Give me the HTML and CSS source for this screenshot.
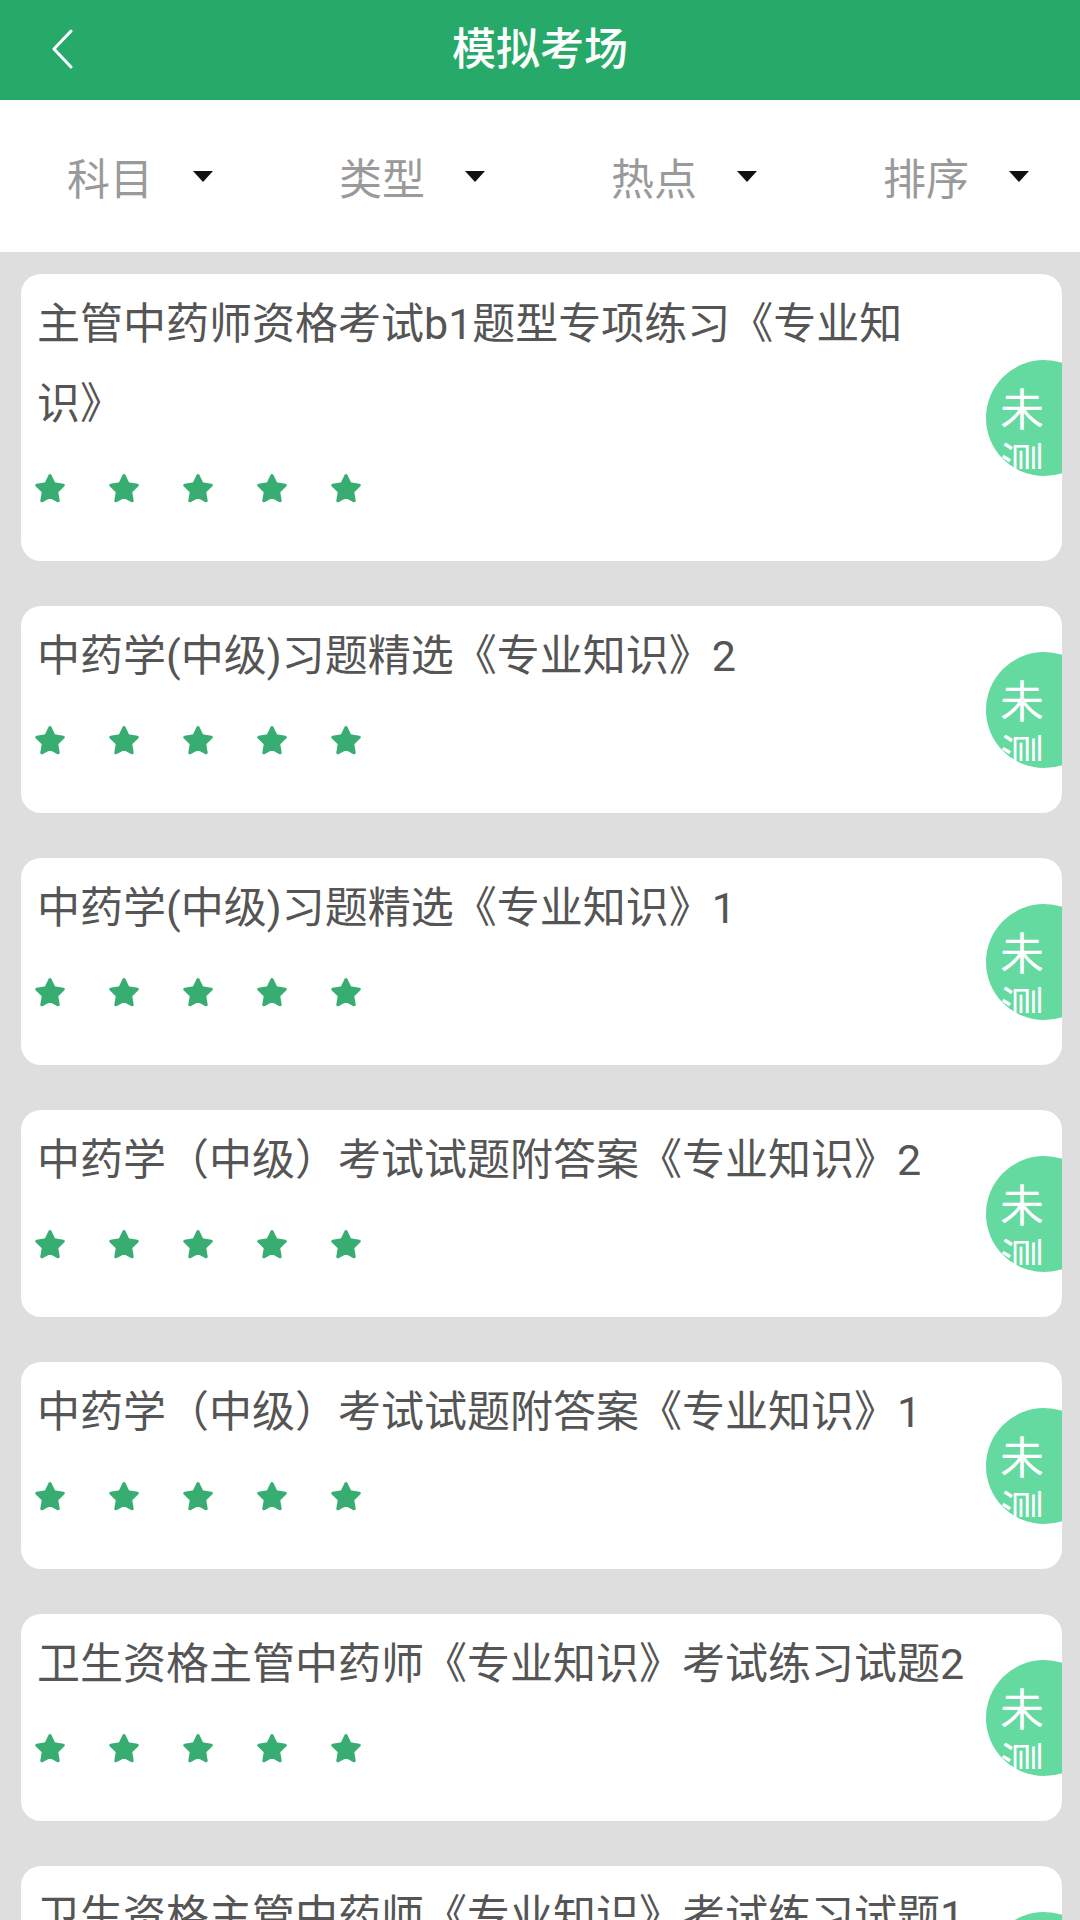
FILE: index.html
```html
<!DOCTYPE html>
<html lang="zh-CN">
<head>
    <meta charset="UTF-8">
    <meta name="viewport" content="width=device-width, initial-scale=1.0">
    <title>模拟考场</title>
    <link rel="stylesheet" href="styles.css">
</head>
<body>
    <header class="topbar">
        <svg class="back" width="24" height="40" viewBox="0 0 24 40">
            <polyline points="20,2 3,20 20,38" fill="none" stroke="#fff" stroke-width="3" stroke-linecap="round" stroke-linejoin="round"/>
        </svg>
        <h1 class="title">模拟考场</h1>
    </header>

    <nav class="filters">
        <div class="filter"><span>科目</span><i class="caret"></i></div>
        <div class="filter"><span>类型</span><i class="caret"></i></div>
        <div class="filter"><span>热点</span><i class="caret"></i></div>
        <div class="filter"><span>排序</span><i class="caret"></i></div>
    </nav>

    <main class="list" id="list"></main>

    <script>
        let exams = [
            "主管中药师资格考试b1题型专项练习《专业知识》",
            "中药学(中级)习题精选《专业知识》2",
            "中药学(中级)习题精选《专业知识》1",
            "中药学（中级）考试试题附答案《专业知识》2",
            "中药学（中级）考试试题附答案《专业知识》1",
            "卫生资格主管中药师《专业知识》考试练习试题2",
            "卫生资格主管中药师《专业知识》考试练习试题1"
        ];

        let star = '<svg class="star" width="32" height="30" viewBox="0 0 32 30">' +
            '<polygon points="16,2.5 20.1,10.8 29.3,12.2 22.7,18.7 24.2,27.8 16,23.5 7.8,27.8 9.3,18.7 2.7,12.2 11.9,10.8" ' +
            'fill="#37ad72" stroke="#37ad72" stroke-width="3" stroke-linejoin="round"/></svg>';

        let html = "";
        exams.forEach(function (name) {
            html += '<div class="card">' +
                '<div class="card-title">' + name + '</div>' +
                '<div class="stars">' + star.repeat(5) + '</div>' +
                '<div class="badge"><span>未测</span></div>' +
                '</div>';
        });
        document.getElementById("list").innerHTML = html;
    </script>
</body>
</html>
```

FILE: styles.css
```css
html, body {
    margin: 0;
    height: 1920px;
    overflow: hidden;
}
body {
    font-family: Roboto, "Noto Sans CJK SC", sans-serif;
    background-color: #dedede;
}
.topbar {
    height: 100px;
    background-color: #27aa69;
    display: flex;
    align-items: center;
    justify-content: center;
    position: relative;
}
.back {
    position: absolute;
    left: 51px;
    top: 29px;
}
.title {
    margin: 0;
    color: #fff;
    font-size: 44px;
    font-weight: 500;
    line-height: 100px;
}
.filters {
    height: 152px;
    background-color: #fff;
    display: flex;
    align-items: center;
    padding-left: 67px;
}
.filter {
    flex: 0 0 272px;
    display: flex;
    align-items: center;
    gap: 40px;
    color: #9a9a9a;
    font-size: 43px;
}
.caret {
    width: 0;
    height: 0;
    border-left: 10px solid transparent;
    border-right: 10px solid transparent;
    border-top: 11px solid #111;
}
.list {
    padding-top: 22px;
}
.card {
    position: relative;
    overflow: hidden;
    background-color: #fff;
    border-radius: 20px;
    margin: 0 18px 45px 21px;
    padding: 10px 92px 58px 16px;
}
.card-title {
    color: #555;
    font-size: 43px;
    line-height: 80px;
    text-spacing-trim: space-all;
}
.stars {
    display: flex;
    gap: 42px;
    margin-top: 29px;
    margin-left: -3px;
    height: 30px;
}
.badge {
    position: absolute;
    right: -40px;
    top: 50%;
    transform: translateY(-50%);
    width: 116px;
    height: 116px;
    border-radius: 50%;
    overflow: hidden;
    background-color: #64d9a0;
    color: #fff;
    font-family: "Noto Sans CJK SC", sans-serif;
    font-size: 44px;
    line-height: 54px;
    padding: 20px 0 0 14px;
    box-sizing: border-box;
}
.badge span {
    display: block;
    width: 44px;
    height: 89px;
    overflow: hidden;
}
```
